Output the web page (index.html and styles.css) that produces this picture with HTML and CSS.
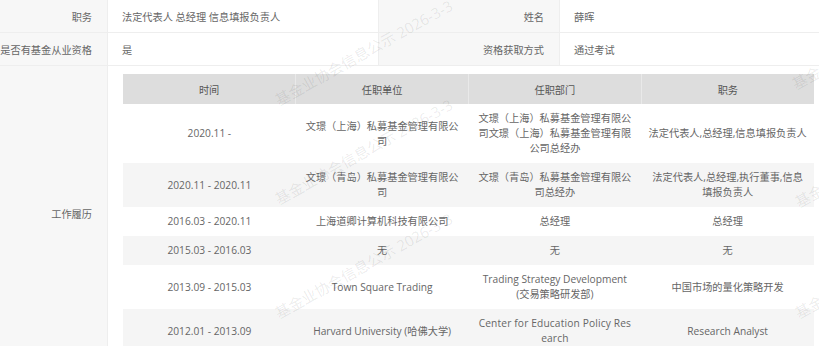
FILE: index.html
```html
<!DOCTYPE html>
<html lang="zh-CN">
<head>
<meta charset="utf-8">
<title>人员信息</title>
<link rel="stylesheet" href="styles.css">
</head>
<body>
<div class="page">
  <div class="info">
    <div class="label">职务</div>
    <div class="value">法定代表人 总经理 信息填报负责人</div>
    <div class="label">姓名</div>
    <div class="value last">薛晖</div>

    <div class="label">是否有基金从业资格</div>
    <div class="value">是</div>
    <div class="label">资格获取方式</div>
    <div class="value last">通过考试</div>

    <div class="label tall">工作履历</div>
    <div class="value wide">
      <table class="history">
        <thead>
          <tr><th>时间</th><th>任职单位</th><th>任职部门</th><th>职务</th></tr>
        </thead>
        <tbody>
          <tr><td>2020.11 -</td><td>文璟（上海）私募基金管理有限公司</td><td>文璟（上海）私募基金管理有限公司文璟（上海）私募基金管理有限公司总经办</td><td>法定代表人,总经理,信息填报负责人</td></tr>
          <tr><td>2020.11 - 2020.11</td><td>文璟（青岛）私募基金管理有限公司</td><td>文璟（青岛）私募基金管理有限公司总经办</td><td>法定代表人,总经理,执行董事,信息填报负责人</td></tr>
          <tr><td>2016.03 - 2020.11</td><td>上海道卿计算机科技有限公司</td><td>总经理</td><td>总经理</td></tr>
          <tr><td>2015.03 - 2016.03</td><td>无</td><td>无</td><td>无</td></tr>
          <tr><td>2013.09 - 2015.03</td><td>Town Square Trading</td><td>Trading Strategy Development<span class="nowrap">(交易策略研发部)</span></td><td>中国市场的量化策略开发</td></tr>
          <tr><td>2012.01 - 2013.09</td><td>Harvard University (哈佛大学)</td><td class="latin">Center for Education Policy Research</td><td>Research Analyst</td></tr>
        </tbody>
      </table>
    </div>
  </div>
  <div class="watermarks" aria-hidden="true">
    <span class="wm wm1">基金业协会信息公示 2026-3-3</span>
    <span class="wm wm2">基金业协会信息公示 2026-3-3</span>
    <span class="wm wm3">基金业协会信息公示 2026-3-3</span>
    <span class="wm wm4">基金业协会信息公示 2026-3-3</span>
    <span class="wm wm5">基金业协会信息公示 2026-3-3</span>
    <span class="wm wm6">基金业协会信息公示 2026-3-3</span>
  </div>
</div>
</body>
</html>
```

FILE: styles.css
```css
* { box-sizing: border-box; }

html, body {
  margin: 0;
  padding: 0;
  background: #fff;
}

body {
  font-family: "Open Sans", "Noto Sans CJK SC", sans-serif;
  font-size: 10.2px;
  color: #666;
  width: 819px;
  height: 346px;
  overflow: hidden;
}

.page {
  position: relative;
  width: 819px;
  height: 346px;
  overflow: hidden;
}

.info {
  display: grid;
  grid-template-columns: 108px 271px 181px 1fr;
  grid-auto-rows: 33px;
}

.label,
.value {
  display: flex;
  align-items: center;
  border-bottom: 1px solid #eeeeee;
  border-right: 1px solid #eeeeee;
  white-space: nowrap;
}

.label {
  justify-content: flex-end;
  padding-right: 15px;
  background: #f7f7f7;
}

.value {
  padding-left: 14px;
  background: #fff;
}

.value.last { border-right: none; }

.label.tall {
  height: 295px;
}

.value.wide {
  grid-column: 2 / 5;
  height: 295px;
  align-items: flex-start;
  padding: 8px 5px 0 15px;
  border-right: none;
  white-space: normal;
}

.history {
  width: 691px;
  table-layout: fixed;
  border-collapse: collapse;
  flex: none;
}

.history th {
  height: 30px;
  padding: 0;
  background: #dddddd;
  color: #555;
  font-weight: normal;
  border-left: 1px solid #e9e9e9;
  text-align: center;
}

.history th:first-child { border-left: none; }

.history td {
  padding: 7px 6.5px;
  line-height: 15px;
  text-align: center;
  word-break: break-all;
  color: #666;
}

.history td:nth-child(3) {
  padding-left: 8.5px;
  padding-right: 8.5px;
}

.history td.latin { letter-spacing: 0.15px; }

.history .nowrap { white-space: nowrap; }

.history tbody tr:nth-child(even) td { background: #f5f5f5; }

.watermarks {
  position: absolute;
  inset: 0;
  pointer-events: none;
}

.wm {
  position: absolute;
  font-size: 15px;
  line-height: 16px;
  white-space: nowrap;
  color: rgba(0, 0, 0, 0.085);
  transform: rotate(-29deg);
  transform-origin: 0 100%;
}

.wm1 { left: 280px; top: 92px; }
.wm2 { left: 280px; top: 191px; }
.wm3 { left: 280px; top: 305px; }
.wm4 { left: 797px; top: 76px; }
.wm5 { left: 800px; top: 194px; }
.wm6 { left: 800px; top: 305px; }
```
